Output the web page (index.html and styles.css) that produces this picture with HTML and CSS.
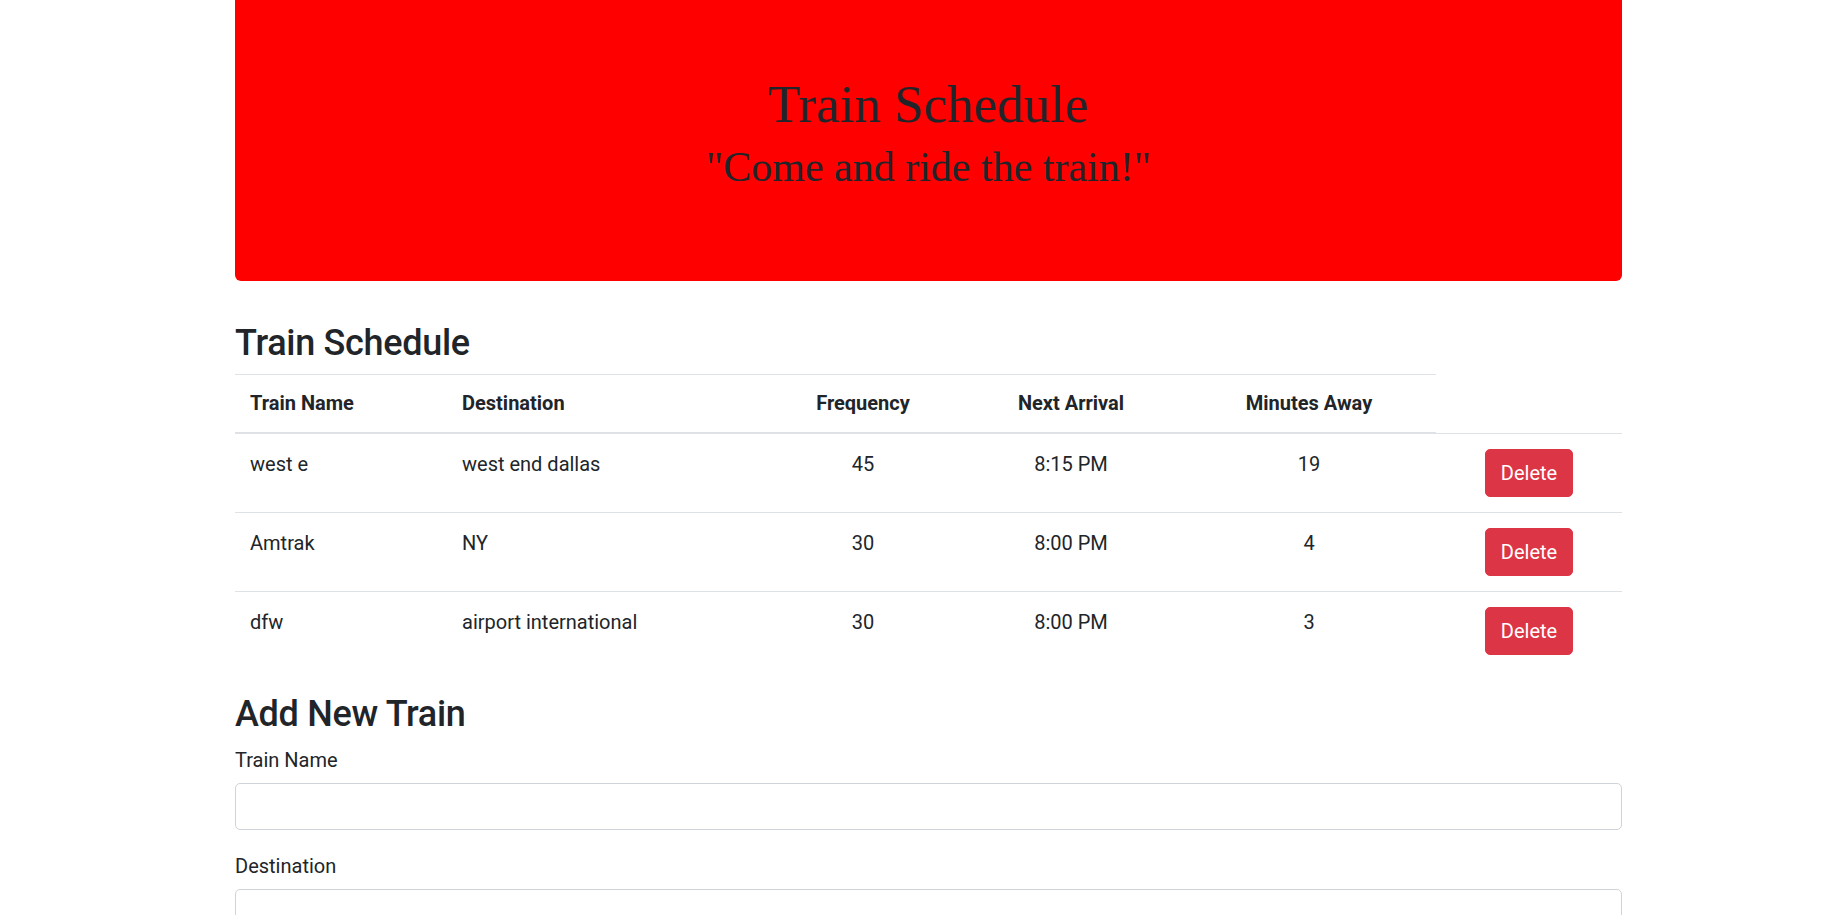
FILE: index.html
```html
<!DOCTYPE html>
<html lang="en">
<head>
<meta charset="utf-8">
<title>Train Schedule</title>
<link rel="stylesheet" href="styles.css">
</head>
<body>
<div class="container">
  <div class="jumbotron">
    <h1 class="jt-title">Train Schedule</h1>
    <h2 class="jt-sub">"Come and ride the train!"</h2>
  </div>

  <h2 class="section-title">Train Schedule</h2>
  <table class="table">
    <colgroup>
      <col class="c1"><col class="c2"><col class="c3"><col class="c4"><col class="c5"><col class="c6">
    </colgroup>
    <thead>
      <tr>
        <th>Train Name</th>
        <th>Destination</th>
        <th class="center">Frequency</th>
        <th class="center">Next Arrival</th>
        <th class="center">Minutes Away</th>
      </tr>
    </thead>
    <tbody>
      <tr>
        <td>west e</td>
        <td>west end dallas</td>
        <td class="center">45</td>
        <td class="center">8:15 PM</td>
        <td class="center">19</td>
        <td class="center"><button class="btn-danger">Delete</button></td>
      </tr>
      <tr>
        <td>Amtrak</td>
        <td>NY</td>
        <td class="center">30</td>
        <td class="center">8:00 PM</td>
        <td class="center">4</td>
        <td class="center"><button class="btn-danger">Delete</button></td>
      </tr>
      <tr>
        <td>dfw</td>
        <td>airport international</td>
        <td class="center">30</td>
        <td class="center">8:00 PM</td>
        <td class="center">3</td>
        <td class="center"><button class="btn-danger">Delete</button></td>
      </tr>
    </tbody>
  </table>

  <h2 class="section-title">Add New Train</h2>
  <form class="train-form">
    <div class="form-group">
      <label class="form-label">Train Name</label>
      <input class="form-control" type="text">
    </div>
    <div class="form-group">
      <label class="form-label">Destination</label>
      <input class="form-control" type="text">
    </div>
    <div class="form-group">
      <label class="form-label">First Train Time (HH:mm - military time)</label>
      <input class="form-control" type="text">
    </div>
    <div class="form-group">
      <label class="form-label">Frequency (min)</label>
      <input class="form-control" type="text">
    </div>
    <button class="btn-primary" type="button">Submit</button>
  </form>
</div>
</body>
</html>
```

FILE: styles.css
```css
* { box-sizing: border-box; }

body {
  margin: 0;
  font-family: Roboto, "Noto Sans", sans-serif;
  font-size: 20px;
  line-height: 1.5;
  color: #212529;
  background: #fff;
}

.container {
  width: 1387px;
  margin-left: 235px;
}

.jumbotron {
  background: #ff0000;
  border-radius: 0 0 6px 6px;
  padding: 74px 40px 89px;
  margin-bottom: 40px;
  text-align: center;
  font-family: "Liberation Serif", "Times New Roman", serif;
  color: #212529;
}

.jt-title {
  margin: 0 0 8px;
  font-size: 53px;
  font-weight: 400;
  line-height: 60px;
}

.jt-sub {
  margin: 0;
  font-size: 42px;
  font-weight: 400;
  line-height: 50px;
}

.section-title {
  margin: 0 0 9px;
  font-size: 36px;
  font-weight: 500;
  line-height: 44px;
  letter-spacing: -0.3px;
}

.table {
  width: 100%;
  border-collapse: collapse;
  table-layout: fixed;
  margin-bottom: 22px;
}

.c1 { width: 212px; }
.c2 { width: 319px; }
.c3 { width: 194px; }
.c4 { width: 222px; }
.c5 { width: 254px; }
.c6 { width: 186px; }

.table th,
.table td {
  padding: 15px;
  border-top: 1px solid #dee2e6;
  vertical-align: top;
  text-align: left;
}

.table th {
  padding: 13px 15px 14px;
  font-weight: 700;
  vertical-align: bottom;
  border-bottom: 2px solid #dee2e6;
}

.table .center { text-align: center; }

.btn-danger {
  font-family: inherit;
  font-size: 20px;
  line-height: 30px;
  padding: 8px 15px;
  color: #fff;
  background: #dc3545;
  border: 1px solid #dc3545;
  border-radius: 5px;
}

.form-group { margin-bottom: 21px; }

.form-label {
  display: block;
  margin-bottom: 8px;
}

.form-control {
  display: block;
  width: 100%;
  height: 47px;
  padding: 7px 15px;
  font-family: inherit;
  font-size: 20px;
  color: #495057;
  background: #fff;
  border: 1px solid #ced4da;
  border-radius: 5px;
}

.btn-primary {
  font-family: inherit;
  font-size: 20px;
  line-height: 30px;
  padding: 8px 15px;
  color: #fff;
  background: #007bff;
  border: 1px solid #007bff;
  border-radius: 5px;
  margin-bottom: 40px;
}
```
